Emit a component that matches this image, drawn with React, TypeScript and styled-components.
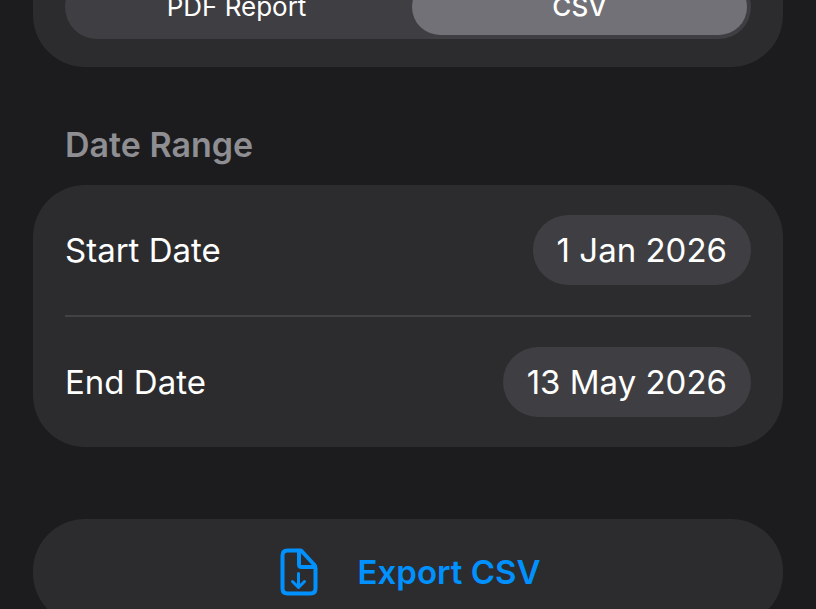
import React, { useState } from "react";
import styled, { createGlobalStyle } from "styled-components";

const GlobalStyle = createGlobalStyle`
  * { box-sizing: border-box; }
  html, body { margin: 0; background: #1c1c1e; }
  body { height: 100vh; overflow: hidden; font-family: Inter, "Liberation Sans", sans-serif; color: #fff; }
  button, input { font: inherit; color: inherit; }
`;

const Page = styled.main`
  height: 100vh;
  padding: 0 33px;
  display: flex;
  flex-direction: column;
  overflow: hidden;
`;

const Card = styled.section`
  flex: none;
  background: #2c2c2e;
  border-radius: 52px;
  padding: 0 32px;
`;

const FormatCard = styled(Card)`
  margin-top: -53px;
  padding-top: 28px;
  padding-bottom: 28px;
`;

const Segments = styled.div`
  display: grid;
  grid-template-columns: 1fr 1fr;
  gap: 8px;
  height: 64px;
  padding: 4px;
  border-radius: 32px;
  background: #3f3f43;
`;

const Segment = styled.button<{ $active: boolean }>`
  border: 0;
  padding: 0;
  border-radius: 28px;
  background: ${(p) => (p.$active ? "#717177" : "transparent")};
  font-size: 26px;
  line-height: 32px;
  font-weight: ${(p) => (p.$active ? 500 : 400)};
`;

const Heading = styled.h2`
  flex: none;
  margin: 54px 32px 16px;
  font-size: 34px;
  line-height: 48px;
  font-weight: 600;
  color: #8e8e93;
`;

const DateRow = styled.div`
  display: flex;
  align-items: center;
  justify-content: space-between;
  height: 130px;
  font-size: 33px;
  line-height: 40px;

  & + & {
    border-top: 2px solid #424245;
    height: 132px;
  }
`;

const DateButton = styled.button`
  height: 70px;
  padding: 0 24px;
  border: 0;
  border-radius: 35px;
  background: #3f3f43;
`;

const ExportButton = styled.button`
  flex: none;
  display: flex;
  align-items: center;
  justify-content: center;
  gap: 40px;
  height: 106px;
  margin-top: 72px;
  padding: 0 0 0 4px;
  border: 0;
  border-radius: 52px;
  background: #2c2c2e;
  color: #0091ff;
  font-size: 33px;
  line-height: 40px;
  font-weight: 600;
`;

function DocumentDownIcon() {
  return (
    <svg width="38" height="48" viewBox="0 0 38 48" fill="none" stroke="currentColor" strokeWidth="4" strokeLinecap="round" strokeLinejoin="round" aria-hidden="true">
      <path d="M20.5 2.5H7.5Q2.5 2.5 2.5 7.5v33q0 5 5 5h23q5 0 5-5V20q0-2-1.5-3.5L22.5 4Q21.5 2.5 20.5 2.5Z" />
      <path d="M19 3.5v13q0 2.500 2.500 2.500H35" strokeWidth="4" />
      <path d="M18.5 25.5v14m-6-6 6 6 6-6" strokeWidth="3" />
    </svg>
  );
}

const formats = ["PDF Report", "CSV"];

export default function App() {
  const [format, setFormat] = useState("CSV");
  return (
    <>
      <GlobalStyle />
      <Page>
        <FormatCard aria-label="Format">
          <Segments>
            {formats.map((f) => (
              <Segment key={f} $active={f === format} aria-pressed={f === format} onClick={() => setFormat(f)}>
                {f}
              </Segment>
            ))}
          </Segments>
        </FormatCard>
        <Heading>Date Range</Heading>
        <Card>
          <DateRow>
            <span id="start">Start Date</span>
            <DateButton id="start-value" aria-labelledby="start start-value">1 Jan 2026</DateButton>
          </DateRow>
          <DateRow>
            <span id="end">End Date</span>
            <DateButton id="end-value" aria-labelledby="end end-value">13 May 2026</DateButton>
          </DateRow>
        </Card>
        <ExportButton>
          <DocumentDownIcon />
          Export {format === "CSV" ? "CSV" : "PDF"}
        </ExportButton>
      </Page>
    </>
  );
}
